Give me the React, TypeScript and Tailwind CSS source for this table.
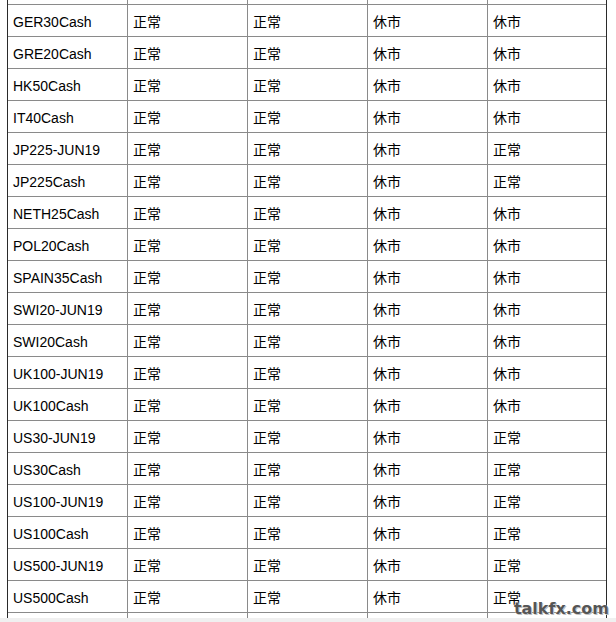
import React from "react";

const rows: [string, string, string, string, string][] = [
  ["GER30Cash", "正常", "正常", "休市", "休市"],
  ["GRE20Cash", "正常", "正常", "休市", "休市"],
  ["HK50Cash", "正常", "正常", "休市", "休市"],
  ["IT40Cash", "正常", "正常", "休市", "休市"],
  ["JP225-JUN19", "正常", "正常", "休市", "正常"],
  ["JP225Cash", "正常", "正常", "休市", "正常"],
  ["NETH25Cash", "正常", "正常", "休市", "休市"],
  ["POL20Cash", "正常", "正常", "休市", "休市"],
  ["SPAIN35Cash", "正常", "正常", "休市", "休市"],
  ["SWI20-JUN19", "正常", "正常", "休市", "休市"],
  ["SWI20Cash", "正常", "正常", "休市", "休市"],
  ["UK100-JUN19", "正常", "正常", "休市", "休市"],
  ["UK100Cash", "正常", "正常", "休市", "休市"],
  ["US30-JUN19", "正常", "正常", "休市", "正常"],
  ["US30Cash", "正常", "正常", "休市", "正常"],
  ["US100-JUN19", "正常", "正常", "休市", "正常"],
  ["US100Cash", "正常", "正常", "休市", "正常"],
  ["US500-JUN19", "正常", "正常", "休市", "正常"],
  ["US500Cash", "正常", "正常", "休市", "正常"],
];

function Row({ cells }: { cells: string[] }) {
  return (
    <div className="grid grid-cols-[120px_120px_120px_120px_118px] h-[32px] border-b border-[#8a8a8a]">
      {cells.map((c, i) => (
        <div
          key={i}
          className={
            "flex items-center pl-[5px] pt-[4px] text-[14px] text-black whitespace-nowrap overflow-hidden " +
            (i < 4 ? "border-r border-[#8a8a8a]" : "")
          }
        >
          {c}
        </div>
      ))}
    </div>
  );
}

export default function App() {
  return (
    <div
      className="relative w-[616px] h-[622px] overflow-hidden bg-white flex flex-col"
      style={{ fontFamily: '"Liberation Sans", Arial, "Noto Sans CJK SC", sans-serif' }}
    >
      <div className="flex-1 overflow-hidden">
        <div className="ml-[7px] w-[600px] mt-[-27px] border-l border-r border-[#2a2a2a]">
          <Row cells={["", "", "", "", ""]} />
          {rows.map((r, i) => (
            <Row key={i} cells={r} />
          ))}
          <Row cells={["", "", "", "", ""]} />
        </div>
      </div>
      <div className="h-[4px] bg-[#f0f0f0]" />
      <div
        className="absolute right-[7px] bottom-[5px] text-[16px] font-bold text-[#555] leading-none"
        style={{ fontFamily: '"DejaVu Sans", sans-serif', textShadow: "0 0 1px #fff, 1px 1px 0 #bbb" }}
      >
        talkfx.com
      </div>
    </div>
  );
}
